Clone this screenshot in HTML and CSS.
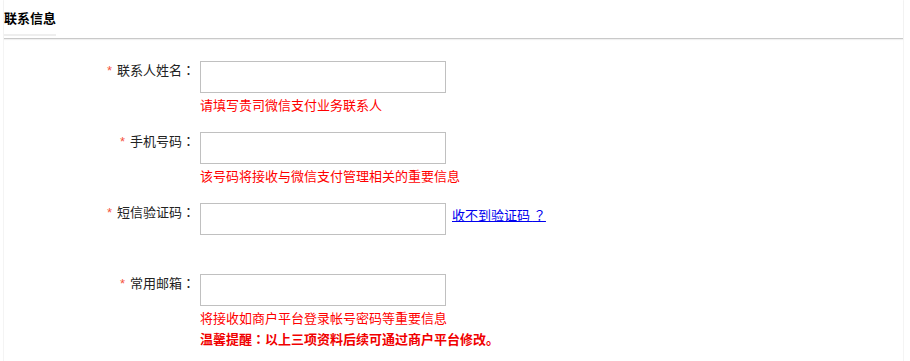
FILE: index.html
```html
<!DOCTYPE html>
<html lang="zh-CN">
<head>
<meta charset="utf-8">
<title>联系信息</title>
<link rel="stylesheet" href="styles.css">
</head>
<body>
<div class="panel">
  <div class="panel-head">
    <h2 class="panel-title">联系信息</h2>
  </div>
  <form class="form">
    <div class="row">
      <label class="label"><span class="req">*</span>联系人姓名<span class="colon" lang="zh-TW">：</span></label>
      <div class="field">
        <input class="input" type="text">
        <div class="hint">请填写贵司微信支付业务联系人</div>
      </div>
    </div>
    <div class="row">
      <label class="label"><span class="req">*</span>手机号码<span class="colon" lang="zh-TW">：</span></label>
      <div class="field">
        <input class="input" type="text">
        <div class="hint">该号码将接收与微信支付管理相关的重要信息</div>
      </div>
    </div>
    <div class="row">
      <label class="label"><span class="req">*</span>短信验证码<span class="colon" lang="zh-TW">：</span></label>
      <div class="field">
        <input class="input" type="text">
        <div class="hint"></div>
      </div>
      <a class="link" href="#">收不到验证码 <span class="colon" lang="zh-TW">？</span></a>
    </div>
    <div class="row">
      <label class="label"><span class="req">*</span>常用邮箱<span class="colon" lang="zh-TW">：</span></label>
      <div class="field">
        <input class="input" type="text">
        <div class="hint">将接收如商户平台登录帐号密码等重要信息</div>
        <div class="hint warn">温馨提醒<span class="colon" lang="zh-TW">：</span>以上三项资料后续可通过商户平台修改。</div>
      </div>
    </div>
  </form>
</div>
</body>
</html>
```
FILE: styles.css
```css
html, body {
  margin: 0;
  padding: 0;
  background: #fff;
}
body {
  font-family: "Noto Sans CJK SC", "Microsoft YaHei", sans-serif;
  font-size: 13px;
  color: #333;
}
.panel {
  margin-left: 3px;
  width: 899px;
  height: 361px;
  border-left: 1px solid #f4f4f4;
  border-right: 1px solid #f4f4f4;
}
.panel-head {
  padding-top: 8px;
  height: 30px;
  border-bottom: 1px solid #c9c9c9;
  box-shadow: 0 1px 1px rgba(0, 0, 0, 0.06);
}
.panel-title {
  display: inline-block;
  margin: 0;
  font-size: 13px;
  font-weight: bold;
  color: #000;
  line-height: 20px;
  padding-bottom: 6px;
  border-bottom: 2px solid #eeeeee;
}
.form {
  padding-top: 22px;
}
.row {
  display: flex;
  align-items: flex-start;
  margin-bottom: 17px;
}
.label {
  width: 191px;
  margin-right: 5px;
  text-align: right;
  line-height: 17px;
  color: #222;
}
.colon {
  font-family: "Noto Sans CJK TC", "Noto Sans CJK SC", sans-serif;
}
.req {
  color: #f5533d;
  margin-right: 5px;
  font-family: "Liberation Sans", sans-serif;
}
.field {
  display: flex;
  flex-direction: column;
  width: 246px;
}
.input {
  box-sizing: border-box;
  width: 246px;
  height: 32px;
  margin: 0;
  border: 1px solid #c0c0c0;
  padding: 0 6px;
  font: inherit;
  outline: none;
  background: #fff;
}
.hint {
  margin-top: 1px;
  height: 21px;
  line-height: 21px;
  color: #ff0000;
  white-space: nowrap;
}
.hint + .hint {
  margin-top: 0;
}
.warn {
  font-weight: bold;
  color: #f00000;
}
.link {
  margin-left: 6px;
  padding-top: 3px;
  line-height: 17px;
  color: #0000ee;
  text-decoration: underline;
  white-space: nowrap;
}
```
